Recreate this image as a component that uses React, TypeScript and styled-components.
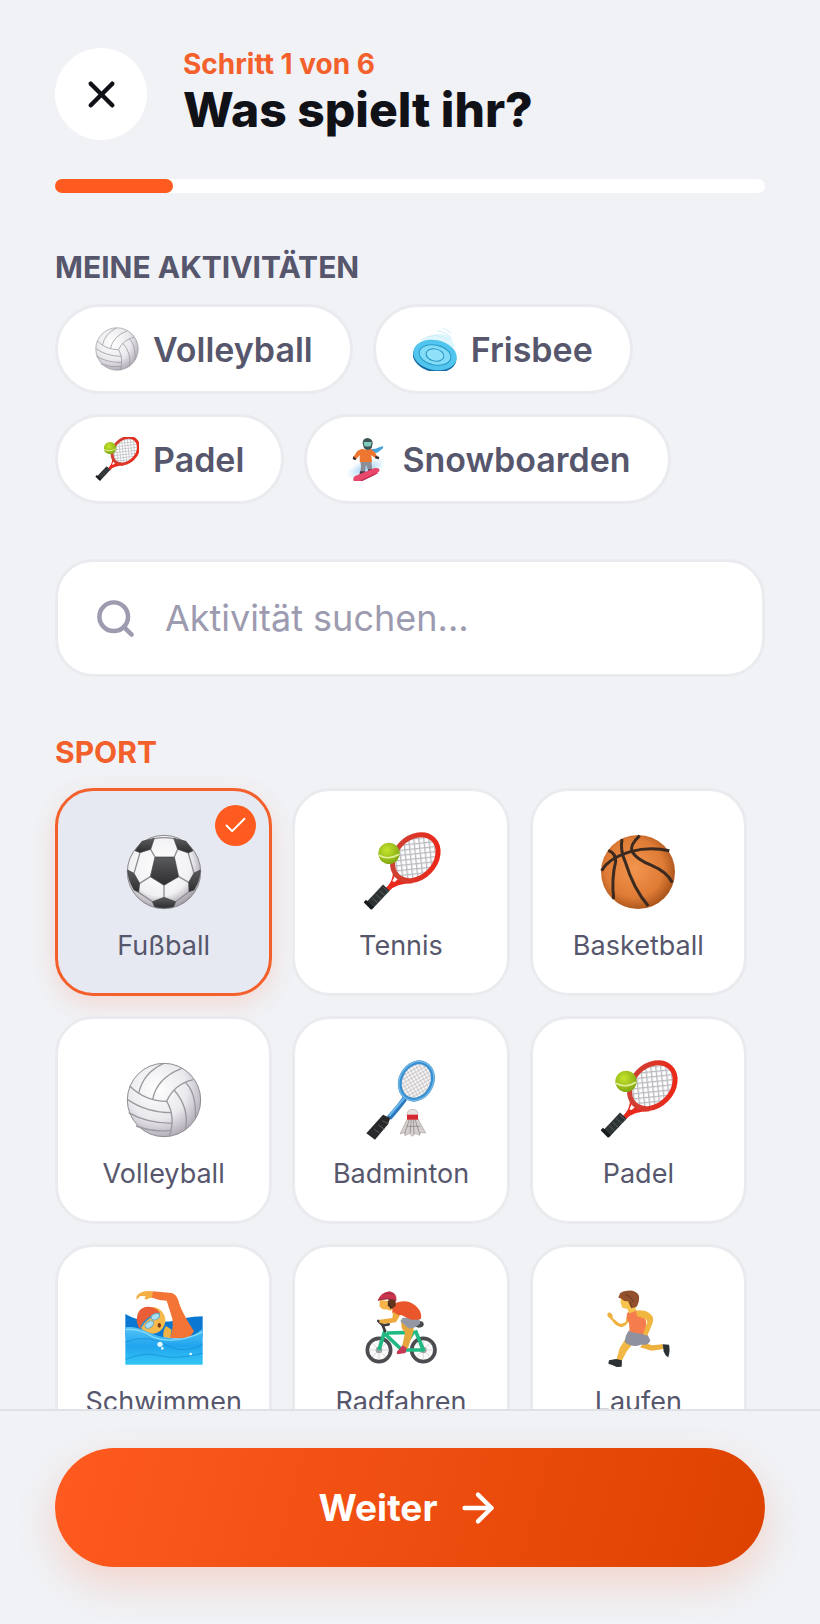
import React, { useState } from 'react'
import styled, { createGlobalStyle, css } from 'styled-components'
import { ArrowRight, Check, Search, X } from 'lucide-react'

type Activity = {
    name: string
    Icon: React.FunctionComponent
}

const Volleyball: React.FunctionComponent = () => (
    <svg viewBox="0 0 228 228" aria-hidden="true">
        <defs>
            <radialGradient id="volley" cx="0.4" cy="0.35" r="0.7">
                <stop offset="0" stopColor="#ffffff"/>
                <stop offset="0.6" stopColor="#e9e8ec"/>
                <stop offset="1" stopColor="#aca6b2"/>
            </radialGradient>
        </defs>
        <circle cx="114" cy="114" r="110" fill="url(#volley)" stroke="#8f8d94" strokeWidth="3"/>
        <g fill="none" stroke="#9b999f" strokeWidth="4">
            <path d="M11 72Q58 118 122 118Q145 66 202 53"/>
            <path d="M122 118C142 150 141 190 130 224"/>
            <path d="M80 112Q93 48 166 20"/>
            <path d="M38 94Q52 32 112 5"/>
            <path d="M4 112Q62 152 137 152"/>
            <path d="M8 152Q62 184 139 184"/>
            <path d="M30 192Q84 212 134 205"/>
            <path d="M144 84Q192 138 178 205"/>
            <path d="M178 61Q212 94 208 168"/>
        </g>
    </svg>
)

const Football: React.FunctionComponent = () => (
    <svg viewBox="0 0 228 228" aria-hidden="true">
        <defs>
            <radialGradient id="football" cx="0.45" cy="0.4" r="0.65">
                <stop offset="0" stopColor="#ffffff"/>
                <stop offset="0.65" stopColor="#f1f0f3"/>
                <stop offset="1" stopColor="#8f8892"/>
            </radialGradient>
            <linearGradient id="patch" x1="0" y1="0" x2="0" y2="1">
                <stop offset="0" stopColor="#5a5b5c"/>
                <stop offset="1" stopColor="#2e2d30"/>
            </linearGradient>
        </defs>
        <circle cx="114" cy="114" r="110" fill="url(#football)" stroke="#8a888c" strokeWidth="3"/>
        <g fill="none" stroke="#8f8e92" strokeWidth="4">
            <path d="M87 69L74 46M145 69L155 46M158 128L188 145M114 154V190M73 128L41 148"/>
            <path d="M42 56L24 118M187 57L204 117M38 175L79 203M189 173L149 203M85 14Q114 8 143 14"/>
        </g>
        <g fill="url(#patch)" stroke="#434345" strokeWidth="2" strokeLinejoin="round">
            <path d="M87 69H145L158 128L114 154L73 128Z"/>
            <path d="M48 22L85 13L74 46L42 56L27 50Z"/>
            <path d="M180 22L143 13L155 46L187 57L201 50Z"/>
            <path d="M5 108L24 118L41 148L38 175L24 168Q6 140 5 108Z"/>
            <path d="M223 108L204 117L188 145L189 173L204 168Q222 140 223 108Z"/>
            <path d="M79 203L114 190L149 203L143 218Q114 226 86 218Z"/>
        </g>
    </svg>
)

const TennisRacket: React.FunctionComponent = () => (
    <svg viewBox="0 0 228 228" aria-hidden="true">
        <defs>
            <pattern id="strings" width="15" height="15" patternUnits="userSpaceOnUse" patternTransform="rotate(40)">
                <rect width="15" height="15" fill="#ffffff"/>
                <path d="M0 2H15M2 0V15" stroke="#b9babf" strokeWidth="4"/>
            </pattern>
            <linearGradient id="frame" x1="0" y1="0" x2="1" y2="1">
                <stop offset="0" stopColor="#c9453b"/>
                <stop offset="1" stopColor="#f02413"/>
            </linearGradient>
            <radialGradient id="ball" cx="0.4" cy="0.35" r="0.7">
                <stop offset="0" stopColor="#c6e42c"/>
                <stop offset="1" stopColor="#7da512"/>
            </radialGradient>
        </defs>
        <path d="M87 90Q98 136 68 162L78 172Q98 148 150 148L120 130L100 104Z" fill="#e8291b"/>
        <path d="M95 127L106 134L95 144L88 142Z" fill="#ffffff"/>
        <ellipse cx="157" cy="71" rx="77" ry="59" fill="url(#strings)" stroke="url(#frame)" strokeWidth="15" transform="rotate(-46 157 71)"/>
        <path d="M70 161L17 217" stroke="#2e3435" strokeWidth="27"/>
        <path d="M60 159L76 174M49 170L66 185M38 181L55 196M28 192L44 206" stroke="#555b5c" strokeWidth="3"/>
        <path d="M9 197L32 220L24 227L2 205Z" fill="#171b1c"/>
        <circle cx="78" cy="58" r="32" fill="url(#ball)"/>
        <path d="M48 64Q76 80 108 61" fill="none" stroke="#e2f09a" strokeWidth="5"/>
    </svg>
)

const Basketball: React.FunctionComponent = () => (
    <svg viewBox="0 0 228 228" aria-hidden="true">
        <defs>
            <radialGradient id="basket" cx="0.45" cy="0.45" r="0.6">
                <stop offset="0" stopColor="#f3954e"/>
                <stop offset="0.65" stopColor="#df7c36"/>
                <stop offset="1" stopColor="#a04c16"/>
            </radialGradient>
        </defs>
        <circle cx="114" cy="114" r="111" fill="url(#basket)"/>
        <g fill="none" stroke="#3b2a20" strokeWidth="9">
            <path d="M5 110Q26 72 94 52Q148 38 208 50"/>
            <path d="M66 15Q60 50 76 84Q100 164 145 216"/>
            <path d="M25 49Q48 58 47 82Q34 134 41 195"/>
            <path d="M119 5Q88 34 96 53Q112 78 155 94Q202 114 217 146"/>
        </g>
    </svg>
)

const Badminton: React.FunctionComponent = () => (
    <svg viewBox="0 0 228 228" aria-hidden="true">
        <defs>
            <pattern id="net" width="10" height="10" patternUnits="userSpaceOnUse" patternTransform="rotate(32)">
                <rect width="10" height="10" fill="#fbfafa"/>
                <path d="M0 2H10M2 0V10" stroke="#b5b1b1" strokeWidth="2"/>
            </pattern>
        </defs>
        <path d="M129 103Q122 118 78 168" fill="none" stroke="#2b78bd" strokeWidth="16"/>
        <path d="M124 108L78 162" stroke="#68b8ec" strokeWidth="6"/>
        <ellipse cx="160" cy="57" rx="47" ry="58" fill="url(#net)" stroke="#3a8fd0" strokeWidth="12" transform="rotate(28 160 57)"/>
        <ellipse cx="160" cy="57" rx="50" ry="61" fill="none" stroke="#74b9e7" strokeWidth="4" transform="rotate(28 160 57)"/>
        <path d="M60 158L82 168L75 187L36 233L10 214Z" fill="#29292b"/>
        <path d="M58 176L76 185M46 189L64 201M33 201L50 213" stroke="#5d5d60" strokeWidth="3"/>
        <path d="M134 169L111 216L124 211L126 221L139 214L148 223L157 214L170 220L173 211L188 213L164 169Z" fill="#d5d0cd" stroke="#a8a19e" strokeWidth="2"/>
        <path d="M139 172L125 216M145 172L141 214M151 172L153 217M156 172L170 216M131 193H171" stroke="#817c7b" strokeWidth="2"/>
        <path d="M132 161Q131 142 149 142Q166 142 165 161Z" fill="#e7e3e1" stroke="#b5b0af" strokeWidth="2"/>
        <path d="M132 158H165V173H132Z" fill="#d72732"/>
    </svg>
)

const Swimmer: React.FunctionComponent = () => (
    <svg viewBox="0 0 228 228" aria-hidden="true">
        <defs>
            <linearGradient id="sea" x1="0" y1="0" x2="0" y2="1">
                <stop offset="0" stopColor="#55c3f6"/>
                <stop offset="0.5" stopColor="#20a5ee"/>
                <stop offset="1" stopColor="#35c5f4"/>
            </linearGradient>
        </defs>
        <path d="M-2 72Q35 94 78 94Q144 99 177 84Q204 80 230 79V142H-2Z" fill="#0878d2"/>
        <path d="M132 144Q148 104 134 70L122 32Q98 32 74 22L80 4L137 9Q151 12 158 34Q164 62 204 124L188 146Z" fill="#f47435"/>
        <path d="M80 4Q56 0 42 9Q28 17 32 29L43 18Q52 17 60 19Q51 27 61 29Q68 23 78 23Z" fill="#f3ae45"/>
        <path d="M112 140Q110 122 120 108L137 119L132 146Z" fill="#efb143"/>
        <circle cx="78" cy="91" r="40" fill="#f7b94c"/>
        <path d="M41 118Q24 89 39 64Q54 43 84 54Q99 60 101 69Q66 79 41 118Z" fill="#e95d37"/>
        <path d="M44 112Q58 82 101 70" fill="none" stroke="#3791c2" strokeWidth="5"/>
        <ellipse cx="88" cy="80" rx="13" ry="9" fill="#aadef1" stroke="#6ba9c4" strokeWidth="3" transform="rotate(-25 88 80)"/>
        <ellipse cx="70" cy="104" rx="14" ry="9" fill="#aadef1" stroke="#6ba9c4" strokeWidth="3" transform="rotate(-35 70 104)"/>
        <ellipse cx="100" cy="106" rx="5" ry="7" fill="#793916"/>
        <path d="M-2 112Q28 107 65 126Q125 152 176 143Q206 137 230 116V224H-2Z" fill="url(#sea)"/>
        <g fill="none" stroke="#1286d8" strokeWidth="3" opacity="0.6">
            <path d="M-2 156Q67 129 133 171Q181 191 230 163"/>
            <path d="M-2 208Q57 184 101 197T230 190"/>
        </g>
        <path d="M-2 119Q40 114 81 141Q145 166 230 126" fill="none" stroke="#8eddfb" strokeWidth="4"/>
        <circle cx="102" cy="163" r="8" fill="#e8f9ff"/>
        <circle cx="109" cy="175" r="4" fill="#e8f9ff"/>
        <circle cx="194" cy="192" r="4" fill="#e8f9ff"/>
    </svg>
)

const Cyclist: React.FunctionComponent = () => (
    <svg viewBox="0 0 228 228" aria-hidden="true">
        <g fill="#fafafa" stroke="#4b4c4f" strokeWidth="11">
            <circle cx="48" cy="180" r="35"/>
            <circle cx="181" cy="180" r="35"/>
        </g>
        <g stroke="#c9cacd" strokeWidth="2">
            <path d="M18 180H78M48 150V210M27 159L69 201M69 159L27 201"/>
            <path d="M151 180H211M181 150V210M160 159L202 201M202 159L160 201"/>
        </g>
        <circle cx="48" cy="180" r="10" fill="#a3a4a8"/>
        <circle cx="181" cy="180" r="10" fill="#a3a4a8"/>
        <path d="M48 180L66 120M61 127L117 180H181L157 121M72 129L151 127L117 180" fill="none" stroke="#20b981" strokeWidth="11" strokeLinejoin="round"/>
        <path d="M46 93L60 106L77 103M57 101L66 123" fill="none" stroke="#3e3b3c" strokeWidth="8" strokeLinecap="round"/>
        <ellipse cx="168" cy="103" rx="14" ry="10" fill="#47484b"/>
        <path d="M114 91L116 114L126 128L117 170L134 177L152 122L150 98Z" fill="#e5a73c"/>
        <path d="M119 83H168L172 100Q158 117 136 115L112 94Z" fill="#9498a5"/>
        <path d="M88 47Q99 34 128 34Q150 37 165 55Q177 69 174 86Q156 93 137 86L115 75L98 79L88 69Z" fill="#e9562c"/>
        <path d="M91 65L88 84L50 89L49 98L61 101L99 97L110 78" fill="#efaa3e"/>
        <path d="M51 29L49 49Q58 61 70 58L85 63L90 36Z" fill="#f5b34a"/>
        <path d="M77 25H98L98 47L87 57L74 47Z" fill="#63341c"/>
        <path d="M44 32Q53 7 80 4Q103 9 100 32Q79 24 44 32Z" fill="#ca344d"/>
        <path d="M45 30Q72 22 100 30M63 12Q77 7 91 13" fill="none" stroke="#942f43" strokeWidth="3"/>
        <path d="M75 34L84 57" stroke="#27282b" strokeWidth="3"/>
        <path d="M119 166L131 174L128 189L104 193Q98 187 104 182Z" fill="#c73a56"/>
    </svg>
)

const Runner: React.FunctionComponent = () => (
    <svg viewBox="0 0 228 228" aria-hidden="true">
        <path d="M80 80L77 96Q65 104 57 100L38 84Q40 72 28 67Q17 72 25 81L35 90Q46 108 64 112Q82 108 91 85Z" fill="#efb13f"/>
        <path d="M132 158L156 166L188 163L190 177L155 182L120 172Z" fill="#edb03c"/>
        <path d="M78 144L101 158L81 183L66 211L49 211L59 175Z" fill="#f2b744"/>
        <path d="M86 122Q112 117 143 134L151 152Q144 167 122 164Q99 175 74 157Q75 137 86 122Z" fill="#8f929e"/>
        <path d="M81 70Q92 58 112 62Q136 76 139 100L135 132Q109 133 89 124L87 99L80 84Z" fill="#f47c4d"/>
        <path d="M107 62Q133 58 150 71Q164 80 157 101L142 137L129 133L142 96L136 86L112 79Z" fill="#f1b642"/>
        <path d="M62 25L62 39L67 53L82 57L87 70Q101 68 108 60L99 25Z" fill="#f6c34d"/>
        <path d="M62 25L55 23L60 10Q69 1 83 2Q107 0 117 17Q119 37 109 51L94 55L84 34L73 33Z" fill="#92502d"/>
        <path d="M91 38L94 51M77 14Q92 18 100 37" fill="none" stroke="#683820" strokeWidth="3"/>
        <path d="M188 163L207 164Q211 181 205 202Q197 200 191 184Z" fill="#2c3135"/>
        <path d="M48 207L66 211L65 230L50 231Q35 224 25 221L27 211Z" fill="#2c3135"/>
    </svg>
)

const Frisbee: React.FunctionComponent = () => (
    <svg viewBox="0 0 44 44" aria-hidden="true">
        <path d="M5 17Q20 2 37 9L42 20Z" fill="#c9f0fb" opacity="0.6"/>
        <path d="M8 13Q22 4 36 13M24 4Q33 4 39 12M30 1L38 6" fill="none" stroke="#cdeff8" strokeWidth="1"/>
        <g transform="rotate(12 22 28)">
            <ellipse cx="22" cy="30" rx="22" ry="15" fill="#176ca6"/>
            <ellipse cx="22" cy="28" rx="22" ry="15" fill="#52c5ee"/>
            <ellipse cx="22" cy="28" rx="16" ry="10" fill="#83dcf7" stroke="#289ac9" strokeWidth="1"/>
            <ellipse cx="22" cy="28" rx="9" ry="6" fill="#8fe2f9" stroke="#238fbf" strokeWidth="1"/>
        </g>
    </svg>
)

const Snowboarder: React.FunctionComponent = () => (
    <svg viewBox="18 51 132 132" aria-hidden="true">
        <defs>
            <radialGradient id="snow">
                <stop offset="0" stopColor="#9fd0f2"/>
                <stop offset="1" stopColor="#ffffff"/>
            </radialGradient>
        </defs>
        <ellipse cx="84" cy="146" rx="62" ry="26" fill="url(#snow)" transform="rotate(-20 84 146)"/>
        <path d="M96 88L112 86L134 78L136 84L118 98L98 98Z" fill="#4aa3da"/>
        <path d="M66 120H100L101 134L104 154H92L84 134L80 160H67L69 138Z" fill="#8b8d97"/>
        <path d="M72 86Q86 92 98 86L112 98L117 108L110 113L100 106L102 126H65L65 106L54 118L46 111L58 93Z" fill="#ef7630"/>
        <path d="M46 109L55 116L52 121L44 117ZM113 107L124 111L122 118L111 115Z" fill="#33292b"/>
        <path d="M74 70Q74 55 88 54Q103 55 104 70L101 84Q90 96 78 85Z" fill="#3f5456"/>
        <path d="M77 66H101L99 77Q88 82 79 77Z" fill="#7fcabb"/>
        <path d="M66 154H82L81 168H64ZM90 148H104L105 160H91Z" fill="#4c3a48"/>
        <path d="M50 169L110 144Q127 142 124 153Q119 163 67 184Q51 189 46 180Q45 173 50 169Z" fill="#e9486b"/>
        <path d="M48 182Q54 189 67 184L118 159" fill="none" stroke="#bb2e52" strokeWidth="4"/>
    </svg>
)

const myActivities: Array<Activity> = [
    { name: 'Volleyball', Icon: Volleyball },
    { name: 'Frisbee', Icon: Frisbee },
    { name: 'Padel', Icon: TennisRacket },
    { name: 'Snowboarden', Icon: Snowboarder }
]

const sports: Array<Activity> = [
    { name: 'Fußball', Icon: Football },
    { name: 'Tennis', Icon: TennisRacket },
    { name: 'Basketball', Icon: Basketball },
    { name: 'Volleyball', Icon: Volleyball },
    { name: 'Badminton', Icon: Badminton },
    { name: 'Padel', Icon: TennisRacket },
    { name: 'Schwimmen', Icon: Swimmer },
    { name: 'Radfahren', Icon: Cyclist },
    { name: 'Laufen', Icon: Runner }
]

const App: React.FunctionComponent = () => {
    const [selected, setSelected] = useState('Fußball')
    const [query, setQuery] = useState('')

    return (
        <Screen>
            <GlobalStyle/>
            <Content>
                <Header>
                    <CloseButton type="button" aria-label="Schließen">
                        <X size={43} strokeWidth={2.5}/>
                    </CloseButton>
                    <div>
                        <Step>Schritt 1 von 6</Step>
                        <Title>Was spielt ihr?</Title>
                    </div>
                </Header>
                <Progress role="progressbar" aria-label="Fortschritt" aria-valuenow={1} aria-valuemin={0} aria-valuemax={6}>
                    <ProgressStep/>
                </Progress>
                <SectionTitle>MEINE AKTIVITÄTEN</SectionTitle>
                <Chips>
                    {myActivities.map(({ name, Icon }) => (
                        <Chip key={name} type="button" onClick={() => setSelected(name)}>
                            <Icon/>
                            {name}
                        </Chip>
                    ))}
                </Chips>
                <SearchField>
                    <Search size={43} strokeWidth={2.5}/>
                    <SearchInput
                        type="text"
                        aria-label="Aktivität suchen"
                        placeholder="Aktivität suchen..."
                        value={query}
                        onChange={event => setQuery(event.target.value)}
                    />
                </SearchField>
                <SectionTitle $accent>SPORT</SectionTitle>
                <Grid>
                    {sports
                        .filter(({ name }) => name.toLowerCase().includes(query.toLowerCase()))
                        .map(({ name, Icon }) => (
                            <Card
                                key={name}
                                type="button"
                                $selected={name === selected}
                                aria-pressed={name === selected}
                                onClick={() => setSelected(name)}
                            >
                                {name === selected && (
                                    <Badge>
                                        <Check size={27} strokeWidth={1.8}/>
                                    </Badge>
                                )}
                                <Icon/>
                                {name}
                            </Card>
                        ))}
                </Grid>
            </Content>
            <Footer>
                <NextButton type="button">
                    Weiter
                    <ArrowRight size={46} strokeWidth={2.3}/>
                </NextButton>
            </Footer>
        </Screen>
    )
}

export default App

const GlobalStyle = createGlobalStyle`
    * {
        box-sizing: border-box;
    }

    body {
        margin: 0;
        background-color: #f0f2f6;
    }

    body, button, input {
        font-family: Inter, 'Liberation Sans', sans-serif;
    }

    button {
        cursor: pointer;
    }
`

const Screen = styled.div`
    display: flex;
    flex-direction: column;
    height: 100vh;
    color: #56566c;
`

const Content = styled.main`
    flex: 1;
    min-height: 0;
    padding: 48px 55px 0;
    overflow-y: auto;
    scrollbar-width: none;
`

const Header = styled.header`
    display: flex;
    align-items: center;
    gap: 36px;
`

const CloseButton = styled.button`
    display: flex;
    justify-content: center;
    align-items: center;
    flex-shrink: 0;
    width: 92px;
    height: 92px;
    padding: 0;
    border: none;
    border-radius: 50%;
    background-color: #ffffff;
    color: #111118;
`

const Step = styled.div`
    font-size: 28px;
    font-weight: 700;
    line-height: 32px;
    color: #f4602b;
`

const Title = styled.h1`
    margin: 0;
    font-size: 48px;
    font-weight: 800;
    line-height: 60px;
    color: #111118;
`

const Progress = styled.div`
    height: 14px;
    margin: 39px 0 56px;
    border-radius: 7px;
    background-color: #ffffff;
`

const ProgressStep = styled.div`
    width: calc(100% / 6);
    height: 100%;
    border-radius: 7px;
    background-color: #ff5a1f;
`

const SectionTitle = styled.h2<{ $accent?: boolean }>`
    margin: 0;
    font-size: 30px;
    font-weight: 700;
    line-height: 36px;
    color: ${({ $accent }) => $accent ? '#f4602b' : '#56566c'};
`

const Chips = styled.div`
    display: flex;
    flex-wrap: wrap;
    gap: 20px;
    margin: 19px 0 55px;
`

const Chip = styled.button`
    display: flex;
    align-items: center;
    gap: 14px;
    height: 90px;
    padding: 0 37px;
    border: 3px solid #e9ebee;
    border-radius: 45px;
    background-color: #ffffff;
    color: #56566c;
    font-size: 34px;
    font-weight: 600;

    svg {
        width: 44px;
        height: 44px;
    }
`

const SearchField = styled.label`
    display: flex;
    align-items: center;
    gap: 28px;
    height: 118px;
    margin-bottom: 57px;
    padding: 0 36px;
    border: 3px solid #e9ebee;
    border-radius: 38px;
    background-color: #ffffff;
    color: #9c9bb0;
`

const SearchInput = styled.input`
    flex: 1;
    min-width: 0;
    padding: 0;
    border: none;
    outline: none;
    background: none;
    color: #56566c;
    font-size: 36px;

    &::placeholder {
        color: #9c9bb0;
        opacity: 1;
    }
`

const Grid = styled.div`
    display: grid;
    grid-template-columns: repeat(3, 1fr);
    gap: 20px;
    padding: 18px 18px 20px 0;
`

const Card = styled.button<{ $selected: boolean }>`
    position: relative;
    display: flex;
    flex-direction: column;
    align-items: center;
    gap: 20px;
    height: 208px;
    padding: 43px 0 0;
    border: 3px solid #e9ebee;
    border-radius: 38px;
    background-color: #ffffff;
    color: #56566c;
    font-size: 27px;
    line-height: 32px;

    > svg {
        width: 76px;
        height: 76px;
        overflow: visible;
    }

    ${({ $selected }) => $selected && css`
        border-color: #f4602b;
        background-color: #e6e9f1;
        box-shadow: 0 8px 24px rgba(255, 90, 31, 0.16);
    `}
`

const Badge = styled.span`
    position: absolute;
    top: 14px;
    right: 13px;
    display: flex;
    justify-content: center;
    align-items: center;
    width: 41px;
    height: 41px;
    border-radius: 50%;
    background-color: #ff5a1f;
    color: #ffffff;
`

const Footer = styled.footer`
    padding: 37px 55px 57px;
    border-top: 2px solid #dfe1e7;
    background-color: #f0f2f6;
`

const NextButton = styled.button`
    display: flex;
    justify-content: center;
    align-items: center;
    gap: 18px;
    width: 100%;
    height: 119px;
    border: none;
    border-radius: 60px;
    background: linear-gradient(105deg, #ff5a1f 0%, #dd4200 100%);
    box-shadow: 0 16px 40px rgba(255, 90, 31, 0.2);
    color: #ffffff;
    font-size: 37px;
    font-weight: 700;
`
